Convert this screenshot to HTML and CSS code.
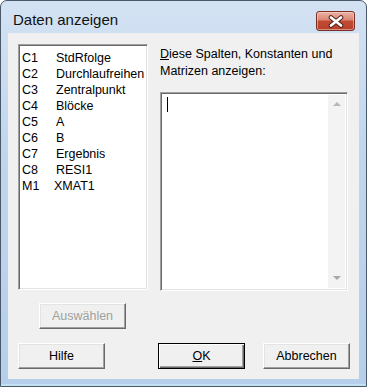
FILE: index.html
```html
<!DOCTYPE html>
<html lang="de">
<head>
    <meta charset="UTF-8">
    <title>Daten anzeigen</title>
    <link rel="stylesheet" href="styles.css">
</head>
<body>

<div class="window">
    <div class="titlebar">
        <span class="title">Daten anzeigen</span>
        <button class="close" title="Schließen">
            <svg width="16" height="13" viewBox="0 0 16 13">
                <path d="M3 2.5 L13 10.5 M13 2.5 L3 10.5" stroke="#4a1f18" stroke-width="4.6" stroke-linecap="round"/>
                <path d="M3 2.5 L13 10.5 M13 2.5 L3 10.5" stroke="#ffffff" stroke-width="2.8" stroke-linecap="round"/>
            </svg>
        </button>
    </div>

    <div class="client">
        <div class="main">
            <!-- Spaltenliste -->
            <ul class="listbox">
                <li><span class="code">C1</span>StdRfolge</li>
                <li><span class="code">C2</span>Durchlaufreihen</li>
                <li><span class="code">C3</span>Zentralpunkt</li>
                <li><span class="code">C4</span>Blöcke</li>
                <li><span class="code">C5</span>A</li>
                <li><span class="code">C6</span>B</li>
                <li><span class="code">C7</span>Ergebnis</li>
                <li><span class="code">C8</span>RESI1</li>
                <li><span class="code short">M1</span>XMAT1</li>
            </ul>

            <div class="right">
                <label class="label">Diese Spalten, Konstanten und Matrizen anzeigen:</label>
                <div class="textbox">
                    <div class="text"><span class="caret"></span></div>
                    <div class="scrollbar">
                        <span class="arrow up"></span>
                        <span class="arrow down"></span>
                    </div>
                </div>
            </div>
        </div>

        <div class="select-row">
            <button class="btn" disabled>Auswählen</button>
        </div>

        <div class="button-row">
            <button class="btn">Hilfe</button>
            <button class="btn default">OK</button>
            <button class="btn">Abbrechen</button>
        </div>
    </div>
</div>

</body>
</html>
```

FILE: styles.css
```css
body {
    margin: 0;
    padding: 0;
    background: #ffffff;
    font-family: 'Liberation Sans', Arial, sans-serif;
    font-size: 12.5px;
    color: #000;
}

.window {
    width: 367px;
    height: 387px;
    box-sizing: border-box;
    display: flex;
    flex-direction: column;
    padding: 0 7px 7px 7px;
    border: 1px solid #4b5868;
    border-radius: 7px 7px 0 0;
    background: linear-gradient(to bottom, #d3e2f3 0%, #c0d6ee 40%, #b5cfea 100%);
    box-shadow: inset 0 -2px 0 #c2e2f4;
}

.titlebar {
    height: 32px;
    display: flex;
    align-items: flex-start;
}

.title {
    margin: 10px 0 0 5px;
    font-size: 15px;
    color: #111;
}

.close {
    margin: 10px 4px 0 auto;
    width: 39px;
    height: 20px;
    padding: 0;
    border: 1px solid #7a2e24;
    border-radius: 3px;
    background: linear-gradient(to bottom, #eab3a6 0%, #d98572 45%, #c24a34 50%, #b7412d 100%);
    box-shadow: inset 0 0 0 1px rgba(255, 220, 210, 0.5);
    display: flex;
    align-items: center;
    justify-content: center;
}

.client {
    flex: 1;
    background: #f0f0f0;
    padding: 11px 9px 0 10px;
}

.main {
    display: flex;
    gap: 12px;
}

.listbox {
    width: 130px;
    height: 246px;
    box-sizing: border-box;
    margin: 0;
    padding: 5px 0 0 3px;
    list-style: none;
    background: #fff;
    border: 1px solid;
    border-color: #a0a0a0 #ffffff #ffffff #a0a0a0;
    box-shadow: inset 1px 1px 0 #696969, inset -1px -1px 0 #e3e3e3;
    overflow: hidden;
}

.listbox li {
    height: 16px;
    line-height: 16px;
    white-space: nowrap;
}

.code {
    display: inline-block;
    width: 34px;
}

.code.short {
    width: 32px;
}

.right {
    width: 188px;
    padding-top: 2px;
}

.label {
    display: block;
    line-height: 17px;
    height: 34px;
    margin-bottom: 12px;
}

/* Tastenkürzel unterstrichen */
.label::first-letter,
.btn.default::first-letter {
    text-decoration: underline;
}

.textbox {
    height: 199px;
    box-sizing: border-box;
    display: flex;
    background: #fff;
    border: 1px solid;
    border-color: #a0a0a0 #ffffff #ffffff #a0a0a0;
    box-shadow: inset 1px 1px 0 #696969, inset -1px -1px 0 #e3e3e3;
    padding: 2px;
}

.text {
    flex: 1;
    padding: 2px 0 0 4px;
}

.caret {
    display: block;
    width: 1px;
    height: 15px;
    background: #000;
}

.scrollbar {
    width: 17px;
    background: #f3f3f3;
    display: flex;
    flex-direction: column;
    justify-content: space-between;
    align-items: center;
    padding: 7px 0 8px 0;
}

.arrow {
    width: 0;
    height: 0;
    border-left: 4px solid transparent;
    border-right: 4px solid transparent;
}

.arrow.up {
    border-bottom: 4px solid #b8b8b8;
}

.arrow.down {
    border-top: 4px solid #a8a8a8;
}

.select-row {
    margin-top: 12px;
    padding-left: 21px;
}

.button-row {
    margin-top: 14px;
    display: flex;
}

.btn {
    width: 87px;
    height: 26px;
    padding: 0;
    font-family: 'Liberation Sans', Arial, sans-serif;
    font-size: 12.5px;
    color: #000;
    background: #f0f0f0;
    border: 1px solid;
    border-color: #ffffff #696969 #696969 #ffffff;
    box-shadow: inset -1px -1px 0 #a0a0a0, inset 1px 1px 0 #e3e3e3;
}

.btn:disabled {
    color: #a0a0a0;
}

.btn.default {
    margin-left: auto;
    margin-right: 18px;
    border: 1px solid #000;
    box-shadow: inset 1px 1px 0 #ffffff, inset -1px -1px 0 #696969, inset -2px -2px 0 #a0a0a0;
}
```
